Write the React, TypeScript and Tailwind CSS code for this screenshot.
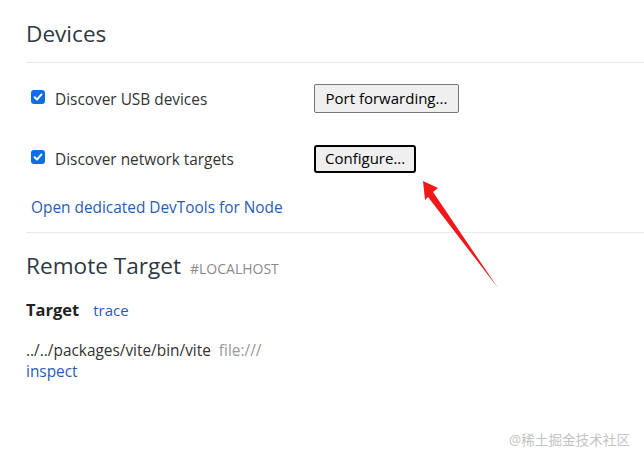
import React from "react";

const font = { fontFamily: '"Open Sans", "Noto Sans", "Noto Sans CJK SC", sans-serif' };

function Check() {
	return (
		<span className="flex h-[14px] w-[14px] shrink-0 items-center justify-center rounded-[3px] bg-[#0d6fe2]">
			<svg width="10" height="10" viewBox="0 0 10 10">
				<path d="M1.6 5.2 L4 7.5 L8.5 2.4" fill="none" stroke="#fff" strokeWidth="1.9" strokeLinecap="round" strokeLinejoin="round" />
			</svg>
		</span>
	);
}

function Row({ label, button, focused }: { label: string; button: string; focused?: boolean }) {
	return (
		<div className="flex items-center h-[29px] pl-[5px]">
			<div className="flex items-center gap-[10px] w-[283px]">
				<span className="-mt-[4px]">
					<Check />
				</span>
				<span className="text-[15.4px] leading-[20px] text-[#333] mt-[2px]">{label}</span>
			</div>
			<button
				className={
					focused
						? "h-[28px] px-[9px] rounded-[3px] border-2 border-black bg-[#efefef] text-[15px] text-black"
						: "h-[29px] px-[10.5px] rounded-[2px] border border-[#767676] bg-[#efefef] text-[15px] text-black"
				}
			>
				{button}
			</button>
		</div>
	);
}

export default function App() {
	return (
		<div className="relative w-[644px] h-[463px] bg-white overflow-hidden" style={font}>
			<div className="pl-[26px] pt-[19px]">
				<h1 className="text-[22.6px] leading-[30px] text-[#303942]">Devices</h1>
				<div className="mt-[13px] border-t border-[#e8e8e8]" />

				<div className="mt-[21px]">
					<Row label="Discover USB devices" button="Port forwarding..." />
				</div>
				<div className="mt-[31px]">
					<Row label="Discover network targets" button="Configure..." focused />
				</div>
				<div className="mt-[25px] pl-[5px] text-[15.4px] leading-[20px] text-[#2a5db0]">
					Open dedicated DevTools for Node
				</div>
				<div className="mt-[14px] border-t border-[#e8e8e8]" />

				<div className="mt-[18px] flex items-baseline gap-[9px] leading-[30px]">
					<span className="text-[22.6px] text-[#303942]">Remote Target</span>
					<span className="text-[14px] text-[#8a8a8a]">#LOCALHOST</span>
				</div>

				<div className="mt-[16px] flex items-baseline gap-[14px] leading-[20px]">
					<span className="text-[16.5px] font-bold text-[#222]">Target</span>
					<span className="text-[15px] text-[#2a5db0]">trace</span>
				</div>

				<div className="mt-[21px] flex items-baseline gap-[8px] leading-[20px] text-[15.4px]">
					<span className="text-[#333]">../../packages/vite/bin/vite</span>
					<span className="text-[#999]">file:///</span>
				</div>
				<div className="text-[15.4px] leading-[21px] text-[#2a5db0]">inspect</div>
			</div>

			<svg className="absolute left-0 top-0" width="644" height="463" viewBox="0 0 644 463">
				<polygon
					points="423,181 438,188 433,192 498,288 428,197 425,200"
					fill="#f01818"
				/>
			</svg>

			<div className="absolute right-[14px] top-[430px] text-[13.6px] text-[#c4c4c4]" style={font}>
				@稀土掘金技术社区
			</div>
		</div>
	);
}
